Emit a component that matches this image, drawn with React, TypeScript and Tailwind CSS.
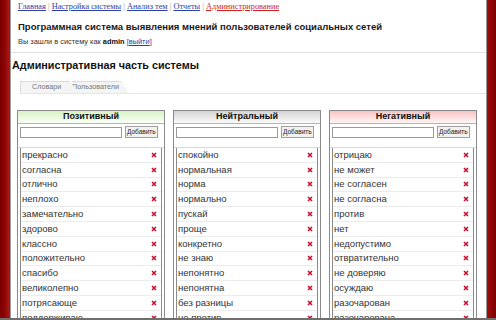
import React from "react";

const positive = [
  "прекрасно",
  "согласна",
  "отлично",
  "неплохо",
  "замечательно",
  "здорово",
  "классно",
  "положительно",
  "спасибо",
  "великолепно",
  "потрясающе",
  "поддерживаю",
];

const neutral = [
  "спокойно",
  "нормальная",
  "норма",
  "нормально",
  "пускай",
  "проще",
  "конкретно",
  "не знаю",
  "непонятно",
  "непонятна",
  "без разницы",
  "не против",
];

const negative = [
  "отрицаю",
  "не может",
  "не согласен",
  "не согласна",
  "против",
  "нет",
  "недопустимо",
  "отвратительно",
  "не доверяю",
  "осуждаю",
  "разочарован",
  "разочарована",
];

function DelIcon() {
  return (
    <svg width="6" height="6" viewBox="0 0 6 6" className="shrink-0">
      <path d="M1 1L5 5M5 1L1 5" stroke="#c8102e" strokeWidth="1.6" />
    </svg>
  );
}

function Column({
  title,
  words,
  head,
}: {
  title: string;
  words: string[];
  head: string;
}) {
  return (
    <div className="w-[148px] border border-[#8a8a8a] bg-white">
      {/* column header */}
      <div
        className={`h-[13px] flex items-center justify-center border-b border-[#b5b5b5] text-[9px] font-bold text-[#111] ${head}`}
      >
        {title}
      </div>

      {/* add form */}
      <div className="flex items-center gap-[3px] px-[2px] pt-[2px] pb-[9px] border-b border-[#d8d8d8]">
        <div className="w-[102px] h-[11px] border border-[#9a9a9a] bg-white" />
        <button className="h-[12px] px-[1px] border border-[#a0a0a0] bg-[#f2f2f2] text-[6.5px] leading-none text-[#222]">
          Добавить
        </button>
      </div>

      {/* word list */}
      <div className="mx-[2px] border-x border-[#8a8a8a]">
        {words.map((w) => (
          <div
            key={w}
            className="h-[14.8px] flex items-center justify-between pl-[1px] pr-[4px] border-b border-[#ececec] text-[9.5px] text-[#333]"
          >
            <span>{w}</span>
            <DelIcon />
          </div>
        ))}
      </div>
    </div>
  );
}

export default function App() {
  return (
    <div
      className="h-[320px] overflow-hidden flex bg-white"
      style={{ fontFamily: '"Liberation Sans", Tahoma, Arial, sans-serif' }}
    >
      {/* left frame */}
      <div className="w-[11px] shrink-0 bg-gradient-to-r from-[#7a0000] via-[#8e0606] to-[#b01818] border-r border-[#999]" />

      <div className="flex-1 flex flex-col min-w-0">
        {/* header */}
        <div className="pl-[7px] pt-[1px] pb-[5px] border-b border-[#e2e2e2]">
          <div
            className="text-[8.3px] leading-[11px] text-[#999]"
            style={{ fontFamily: '"Liberation Serif", "DejaVu Serif", serif' }}
          >
            <a className="text-[#2b3fa5] underline">Главная</a> |{" "}
            <a className="text-[#2b3fa5] underline">Настройка системы</a> |{" "}
            <a className="text-[#2b3fa5] underline">Анализ тем</a> |{" "}
            <a className="text-[#2b3fa5] underline">Отчеты</a> |{" "}
            <a className="text-[#d11f1f] underline">Администрирование</a>
          </div>
          <div className="mt-[8px] text-[9.5px] leading-[14px] font-bold text-[#1a1a1a]">
            Программная система выявления мнений пользователей социальных сетей
          </div>
          <div className="mt-[2px] text-[7.4px] leading-[11px] text-[#333]">
            Вы зашли в систему как <b className="text-[#111]">admin</b>{" "}
            <span className="text-[#2b3fa5]">
              [<span className="underline">выйти</span>]
            </span>
          </div>
        </div>

        {/* admin title */}
        <div className="pl-[1px] pt-[5px] text-[10.8px] leading-[15px] font-bold text-[#111]">
          Административная часть системы
        </div>

        {/* tabs */}
        <div className="mt-[9px] ml-[9px] flex items-end h-[12px] border-b border-[#e6e6e6] text-[7.2px] text-[#777]">
          <div className="relative z-10 w-[58px] shrink-0 h-[12px] flex items-center pl-[11px] bg-[#f4f4f4] border-t border-l border-[#dcdcdc] [clip-path:polygon(0_0,86%_0,100%_100%,0_100%)]">
            Словари
          </div>
          <div className="-ml-[6px] h-[12px] flex items-center pl-0 pr-[10px] bg-[#f4f4f4] border-t border-[#dcdcdc] [clip-path:polygon(0_0,86%_0,100%_100%,0_100%)]">
            Пользователи
          </div>
        </div>

        {/* columns */}
        <div className="mt-[16px] pl-[6px] flex gap-[8px]">
          <Column
            title="Позитивный"
            words={positive}
            head="bg-gradient-to-b from-[#d8f2c4] to-[#fbfff8]"
          />
          <Column
            title="Нейтральный"
            words={neutral}
            head="bg-gradient-to-b from-[#d4d4d4] to-[#fafafa]"
          />
          <Column
            title="Негативный"
            words={negative}
            head="bg-gradient-to-b from-[#f6c4c4] to-[#fff6f6]"
          />
        </div>
      </div>

      {/* right frame */}
      <div className="w-[10px] shrink-0 bg-gradient-to-r from-[#a01010] via-[#8e0606] to-[#7a0000] border-l border-[#999]" />

      {/* bottom edge of window */}
      <div className="fixed left-0 right-0 bottom-0 h-[2px] bg-[#6f6f6f]" />
    </div>
  );
}
